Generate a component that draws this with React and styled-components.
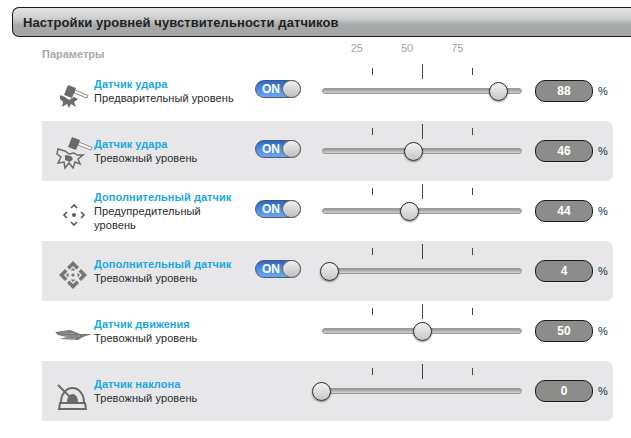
import React from 'react'
import styled, { createGlobalStyle } from 'styled-components'

const GlobalStyle = createGlobalStyle`
  html, body {
    margin: 0;
    padding: 0;
    background: #fff;
    overflow: hidden;
  }
  body {
    font-family: "Liberation Sans", Arial, sans-serif;
  }
`

const Page = styled.div`
  width: 631px;
  height: 438px;
  padding-top: 7px;
  padding-left: 12px;
  box-sizing: border-box;
  overflow: hidden;
`

const Header = styled.div`
  height: 30px;
  margin-right: -4px;
  padding-left: 10px;
  box-sizing: border-box;
  display: flex;
  align-items: center;
  border: 1px solid #1a1a1a;
  border-right: 0;
  border-radius: 7px 0 0 7px;
  background: linear-gradient(to bottom, #e2e3e3 0%, #cfd0d0 35%, #a6a7a8 62%, #a5a6a7 100%);
  color: #222;
  font-size: 13px;
  font-weight: bold;
  letter-spacing: 0.08px;
`

const Table = styled.div`
  margin-left: 30px;
  width: 571px;
`

const ScaleRow = styled.div`
  height: 24px;
  display: flex;
`

const ParamsLabel = styled.div`
  width: 280px;
  padding-top: 11px;
  color: #a9a9a9;
  font-size: 11px;
  font-weight: bold;
`

const ScaleLabels = styled.div`
  width: 200px;
  padding-top: 5px;
  display: flex;
  justify-content: center;
  gap: 38px;
  margin-left: -15px;
  color: #a4a4ae;
  font-size: 11px;
`

const Row = styled.div`
  height: 60px;
  display: grid;
  grid-template-columns: 52px 161px 67px 200px 13px 58px 20px;
  background: ${({ $shaded }) => ($shaded ? '#e7e7e9' : 'transparent')};
  border-radius: ${({ $shaded }) => ($shaded ? '0 7px 7px 0' : '0')};
`

const IconCell = styled.div`
  padding: 14px 0 0 8px;
  svg {
    display: block;
    overflow: visible;
  }
`

const Info = styled.div`
  padding-top: ${({ $wrapped }) => ($wrapped ? '9px' : '16px')};
  padding-right: 16px;
  font-size: 11px;
  line-height: 14px;
`

const Title = styled.div`
  color: #1ba8de;
  font-weight: bold;
  white-space: nowrap;
  letter-spacing: 0.04px;
`

const Subtitle = styled.div`
  color: #2a2a2a;
  letter-spacing: 0.09px;
`

const ToggleCell = styled.div`
  padding-top: 19px;
`

const Toggle = styled.div`
  width: 46px;
  height: 18px;
  box-sizing: border-box;
  position: relative;
  border: 1px solid #4a5a70;
  border-radius: 9px;
  background: linear-gradient(to bottom, #2f66c4 0%, #4f8fe6 55%, #6aa6f0 100%);
  color: #fff;
  font-size: 12px;
  font-weight: bold;
  line-height: 16px;
  padding-left: 6px;
`

const ToggleKnob = styled.span`
  position: absolute;
  top: -1px;
  right: -1px;
  width: 19px;
  height: 18px;
  box-sizing: border-box;
  border: 1px solid #666;
  border-radius: 50%;
  background: linear-gradient(to bottom, #f2f2f2, #bdbdbd);
`

const SliderCell = styled.div`
  position: relative;
  padding-top: 3px;
`

const Ticks = styled.div`
  height: 15px;
  display: flex;
  align-items: center;
  justify-content: center;
  gap: 49px;
`

const Tick = styled.span`
  width: 1px;
  height: ${({ $major }) => ($major ? '15px' : '7px')};
  background: #444;
`

const Track = styled.div`
  margin-top: 9px;
  height: 6px;
  box-sizing: border-box;
  border: 1px solid #999;
  border-radius: 3px;
  background: linear-gradient(to bottom, #979797, #d2d2d2);
`

const Thumb = styled.span`
  position: absolute;
  top: 21px;
  width: 19px;
  height: 19px;
  margin-left: -9px;
  box-sizing: border-box;
  border: 1px solid #2c2c2c;
  border-radius: 50%;
  background: linear-gradient(to bottom, #f3f4f4, #c4c6c8);
  box-shadow: 0 1px 2px rgba(0, 0, 0, 0.45);
`

const ValuePill = styled.div`
  grid-column: 6;
  margin-top: 19px;
  height: 22px;
  box-sizing: border-box;
  border: 1px solid #1c1c1c;
  border-radius: 10px;
  background: #8c8d8b;
  color: #fff;
  font-size: 12px;
  font-weight: bold;
  line-height: 20px;
  text-align: center;
`

const Unit = styled.div`
  padding: 24px 0 0 5px;
  color: #12303f;
  font-size: 11px;
`

const ICON_GREY = '#6a6a6a'

const Hammer = () => (
  <g>
    <path d="M25 15 L38 20.5 L37 23 L24 18 Z" fill="#fff" stroke="#8a8a8a" strokeWidth="1" />
    <path d="M18 10 L26 13 L22 23 L14 20 Z" fill={ICON_GREY} />
  </g>
)

const ShockSolidIcon = () => (
  <svg width="40" height="40" viewBox="0 0 40 40">
    <Hammer />
    <path d="M10 20 L15 22 L19 25 L24 22 L28 24 L24 27 L26 32 L21 29 L19 33 L17 29 L12 32 L13 27 L10 24 Z" fill={ICON_GREY} />
  </svg>
)

const ShockOutlineIcon = () => (
  <svg width="40" height="40" viewBox="0 0 40 40">
    <g transform="translate(4 -8)">
      <Hammer />
    </g>
    <path d="M8 14 L15 16 L19 19 L24 18 L27 20 L33 20 L28 24 L30 29 L25 27 L23 33 L19 28 L15 33 L14 27 L8 28 L11 22 L7 19 Z" fill="none" stroke={ICON_GREY} strokeWidth="1.5" />
    <path d="M15 20 L21 21 L23 24 L20 27 L15 25 Z" fill={ICON_GREY} />
  </svg>
)

const DirectionsIcon = () => (
  <svg width="40" height="40" viewBox="0 0 40 40" fill="none" stroke="#5c5c5c" strokeWidth="1.7">
    <g transform="translate(12 8)">
      <path d="M9 5 L12 2 L15 5" />
      <path d="M9 19 L12 22 L15 19" />
      <path d="M5 9 L2 12 L5 15" />
      <path d="M19 9 L22 12 L19 15" />
      <circle cx="12" cy="12" r="2" fill="#5c5c5c" stroke="none" />
    </g>
  </svg>
)

const DirectionsBoldIcon = () => (
  <svg width="40" height="40" viewBox="0 0 40 40" fill="#777">
    <g transform="translate(8 5)">
      <path d="M15 1 L21 7 L18.5 9.5 L15 6 L11.5 9.5 L9 7 Z" />
      <path d="M15 8 L17 10 L16 11 L15 10 L14 11 L13 10 Z" />
      <path d="M15 29 L21 23 L18.5 20.5 L15 24 L11.5 20.5 L9 23 Z" />
      <path d="M15 22 L17 20 L16 19 L15 20 L14 19 L13 20 Z" />
      <path d="M1 15 L7 9 L9.5 11.5 L6 15 L9.5 18.5 L7 21 Z" />
      <path d="M8 15 L10 13 L11 14 L10 15 L11 16 L10 17 Z" />
      <path d="M29 15 L23 9 L20.5 11.5 L24 15 L20.5 18.5 L23 21 Z" />
      <path d="M22 15 L20 13 L19 14 L20 15 L19 16 L20 17 Z" />
      <circle cx="15" cy="15" r="1.6" />
    </g>
  </svg>
)

const MotionIcon = () => (
  <svg width="40" height="40" viewBox="0 0 40 40">
    <g transform="translate(0 5)">
      <path d="M5 12 L20 10 L30 14 L42 14 L33 17 L28 20 L10 19 L17 17 L8 15 Z" fill="#777" />
      <path d="M11 13 L24 13.5 M13 16 L30 16 M14 18 L26 18.5" stroke="#b5b5b5" strokeWidth="0.7" />
    </g>
  </svg>
)

const TiltIcon = () => (
  <svg width="40" height="40" viewBox="0 0 40 40" fill="none" stroke={ICON_GREY}>
    <path d="M11 27 A11.5 14 0 0 1 34 27" strokeWidth="2" />
    <path d="M17 27 A5.5 8 0 0 1 28 27 Z" fill={ICON_GREY} stroke="none" />
    <path d="M10 28 L35 28 L36 34 L9 34 Z" fill="#e7e7e9" strokeWidth="2" />
    <path d="M8 10 L20 22" strokeWidth="2" />
  </svg>
)

// thumb is the knob offset on the 200px track, not always value * 2
const SENSORS = [
  { icon: ShockSolidIcon, title: 'Датчик удара', sub: 'Предварительный уровень', toggle: true, value: 88, thumb: 176 },
  { icon: ShockOutlineIcon, title: 'Датчик удара', sub: 'Тревожный уровень', toggle: true, value: 46, thumb: 91 },
  { icon: DirectionsIcon, title: 'Дополнительный датчик', sub: 'Предупредительный уровень', toggle: true, value: 44, thumb: 87, wrapped: true },
  { icon: DirectionsBoldIcon, title: 'Дополнительный датчик', sub: 'Тревожный уровень', toggle: true, value: 4, thumb: 7 },
  { icon: MotionIcon, title: 'Датчик движения', sub: 'Тревожный уровень', value: 50, thumb: 100 },
  { icon: TiltIcon, title: 'Датчик наклона', sub: 'Тревожный уровень', value: 0, thumb: -1 },
]

const SensorRow = ({ sensor, shaded }) => {
  const Icon = sensor.icon
  return (
    <Row $shaded={shaded}>
      <IconCell><Icon /></IconCell>
      <Info $wrapped={sensor.wrapped}>
        <Title>{sensor.title}</Title>
        <Subtitle>{sensor.sub}</Subtitle>
      </Info>
      <ToggleCell>
        {sensor.toggle && <Toggle>ON<ToggleKnob /></Toggle>}
      </ToggleCell>
      <SliderCell>
        <Ticks>
          <Tick />
          <Tick $major />
          <Tick />
        </Ticks>
        <Track />
        <Thumb style={{ left: `${sensor.thumb}px` }} />
      </SliderCell>
      <ValuePill>{sensor.value}</ValuePill>
      <Unit>%</Unit>
    </Row>
  )
}

export default function App () {
  return (
    <Page>
      <GlobalStyle />
      <Header>Настройки уровней чувствительности датчиков</Header>
      <Table>
        <ScaleRow>
          <ParamsLabel>Параметры</ParamsLabel>
          <ScaleLabels>
            <span>25</span>
            <span>50</span>
            <span>75</span>
          </ScaleLabels>
        </ScaleRow>
        {SENSORS.map((sensor, i) => (
          <SensorRow key={i} sensor={sensor} shaded={i % 2 === 1} />
        ))}
      </Table>
    </Page>
  )
}
